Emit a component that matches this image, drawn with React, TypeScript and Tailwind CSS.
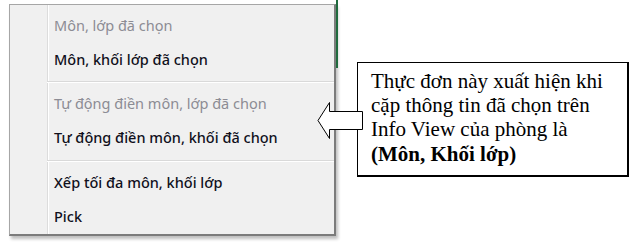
import React from "react";

const items: Array<{ label: string; disabled?: boolean } | "sep1" | "sep2"> = [
  { label: "Môn, lớp đã chọn", disabled: true },
  { label: "Môn, khối lớp đã chọn" },
  "sep1",
  { label: "Tự động điền môn, lớp đã chọn", disabled: true },
  { label: "Tự động điền môn, khối đã chọn" },
  "sep2",
  { label: "Xếp tối đa môn, khối lớp" },
  { label: "Pick" },
];

export default function App() {
  return (
    <div className="relative w-[644px] h-[248px] bg-white overflow-hidden flex items-start">
      {/* Context menu */}
      <div className="ml-[9px] mt-[4px] w-[327px] flex bg-[#f0f0f0] border-t border-l border-[#a6a6a6] border-r-2 border-b-2 border-r-[#7c7c7c] border-b-[#7c7c7c] shadow-[2px_3px_3px_rgba(0,0,0,0.25)]">
        <div className="w-[38px] shrink-0 border-r border-[#dcdcdc]" />
        <div className="w-px shrink-0 bg-white" />
        <div className="flex-1 flex flex-col pt-[4px]">
          {items.map((it, i) => {
            if (it === "sep1" || it === "sep2") {
              return (
                <div
                  key={i}
                  className={
                    it === "sep1"
                      ? "h-[10px] pt-[4px] -ml-[2px]"
                      : "h-[11px] pt-[5px] -ml-[2px]"
                  }
                >
                  <div className="h-px bg-[#d9d9d9]" />
                  <div className="h-px bg-white" />
                </div>
              );
            }
            return (
              <div
                key={i}
                className={
                  "h-[34px] flex items-center pl-[5px] text-[14.5px] whitespace-nowrap font-['Noto_Sans',sans-serif] " +
                  (it.disabled ? "text-[#8c8c94]" : "text-[#10101c] font-medium")
                }
              >
                {it.label}
              </div>
            );
          })}
        </div>
      </div>

      {/* Green edge of sheet behind */}
      <div className="w-[2px] h-[68px] bg-[#1f6b3d] shrink-0" />

      {/* Callout box */}
      <div className="ml-[19px] mt-[62px] w-[272px] h-[115px] shrink-0 bg-white border-t border-l border-r-2 border-b-2 border-black pl-[13px] pt-[6px] font-['Liberation_Serif','Times_New_Roman',serif] text-[21px] leading-[24.2px] text-black whitespace-nowrap">
        <div>Thực đơn này xuất hiện khi</div>
        <div>cặp thông tin đã chọn trên</div>
        <div>Info View của phòng là</div>
        <div className="font-bold">(Môn, Khối lớp)</div>
      </div>

      {/* Block arrow overlay */}
      <svg
        className="absolute left-0 top-0 pointer-events-none"
        width="644"
        height="248"
        viewBox="0 0 644 248"
      >
        <polygon
          points="318,120.5 329.5,102.5 329.5,111.5 362.5,111.5 362.5,129.5 329.5,129.5 329.5,138.5"
          fill="white"
          stroke="black"
          strokeWidth="1"
        />
      </svg>
    </div>
  );
}
